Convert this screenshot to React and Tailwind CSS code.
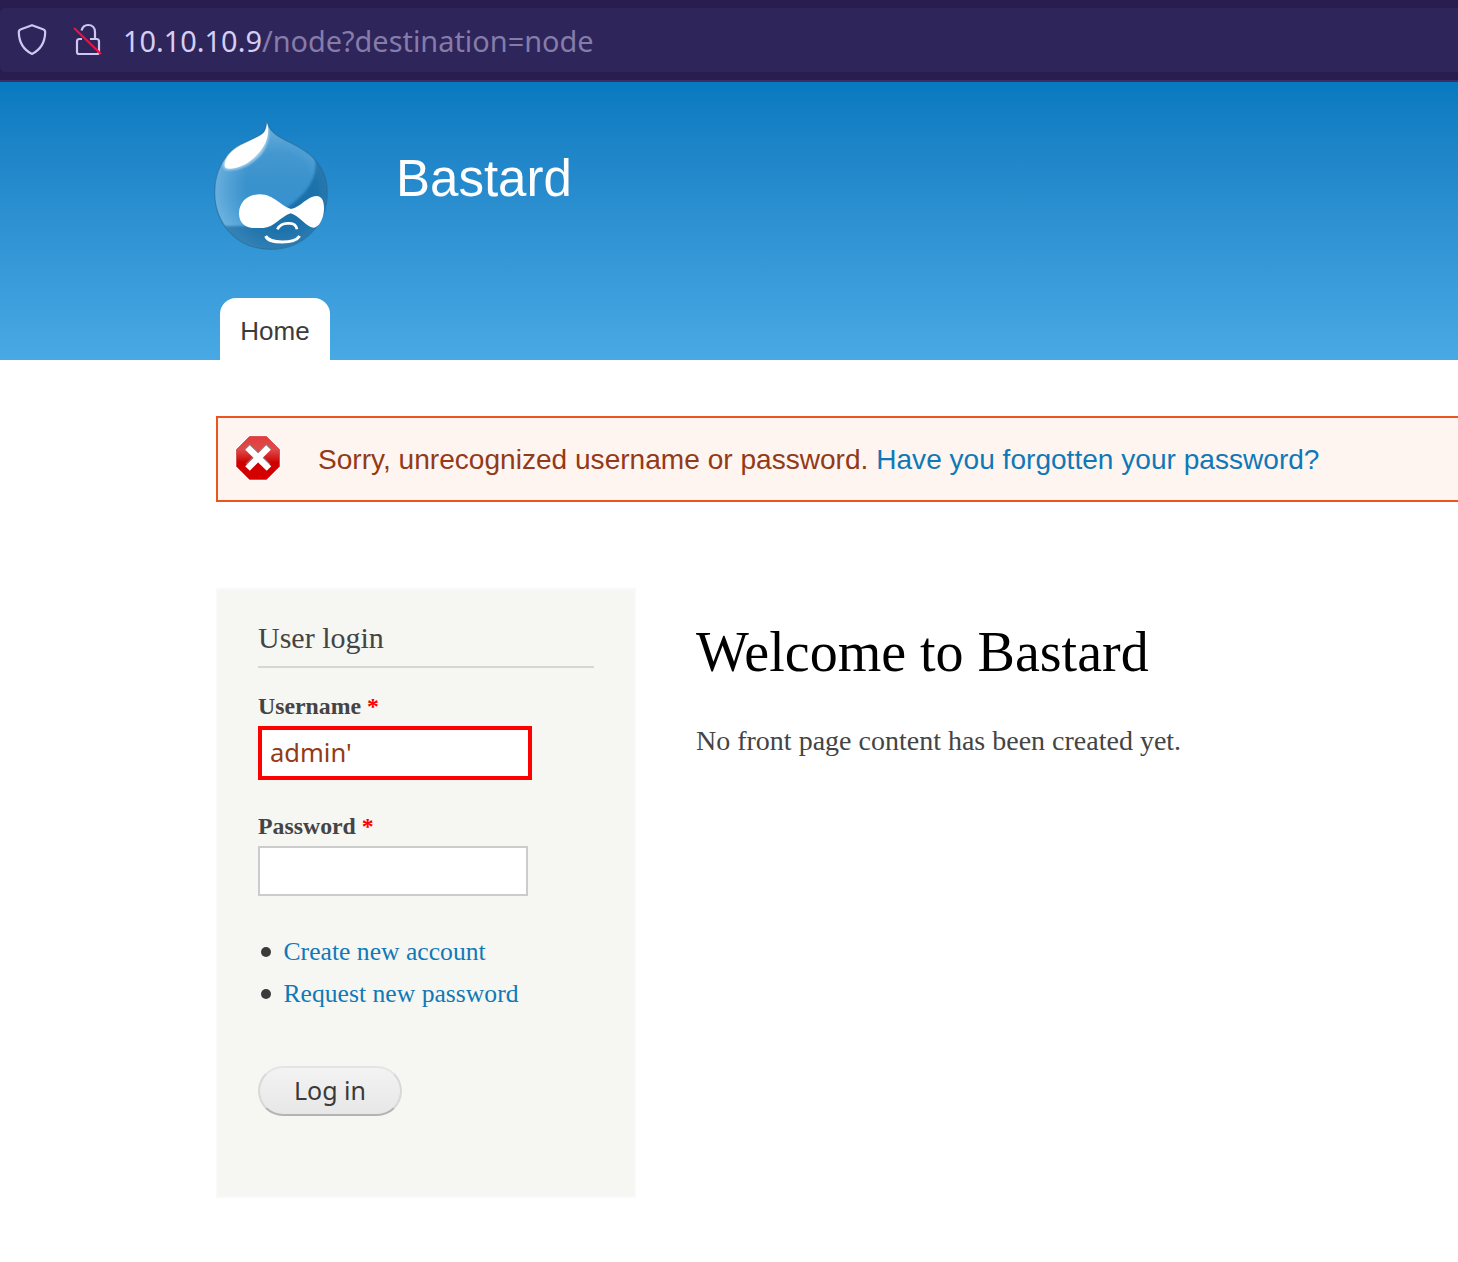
import React from "react";

const SANS = "font-['Liberation_Sans',Arial,sans-serif]";
const SERIF = "font-['Liberation_Serif',Georgia,serif]";

function AddressBar() {
  return (
    <div className="h-[82px] border-b-2 border-[#3b2d68] bg-[#291d4f] pt-2">
      <div className="flex h-16 items-center rounded-l-md bg-[#2e255b] pl-4 font-['Noto_Sans',sans-serif]">
        <svg width="32" height="34" viewBox="0 0 32 34" fill="none" stroke="#cfc7f0" strokeWidth="2.2" strokeLinejoin="round">
          <path d="M16 2.200 L27 6.200 Q29.300 7 29.200 9.400 Q28.800 24.500 16 31 Q3.200 24.500 2.800 9.400 Q2.700 7 5 6.200 Z" />
        </svg>
        <svg className="ml-6" width="32" height="34" viewBox="0 0 32 34" fill="none" strokeWidth="2.2">
          <path d="M9.500 7.500 C10.500 4 12.500 2 16 2 C20.500 2 23 5 23 9 V16" stroke="#cfc7f0" />
          <path d="M10 16 H7.500 Q5 16 5 18.500 V29 Q5 31 7 31 H25 Q27 31 27 29 V18.500 Q27 16 24.500 16 H18" stroke="#cfc7f0" />
          <path d="M2 5 L29 31" stroke="#f0103f" />
        </svg>
        <div className="mt-0.5 ml-[19px] whitespace-nowrap text-[28.9px] leading-none text-[#857ca8]">
          <span className="text-[#d5cef2]">10.10.10.9</span>/node?destination=node
        </div>
      </div>
    </div>
  );
}

const DROP =
  "M201 34 C205 52 215 68 240 82 C275 102 316 116 342 146 C370 176 382 208 382 246 C382 345 310 418 210 418 C115 418 44 345 44 246 C44 195 60 162 84 132 C112 100 153 94 184 72 C199 62 197 49 201 34 Z";

function Logo() {
  return (
    <svg width="114" height="130" viewBox="42 36 342 390" fill="none">
      <defs>
        <linearGradient id="drop" x1="0" y1="0" x2="0" y2="1">
          <stop offset="0" stopColor="#4f9ed3" />
          <stop offset=".45" stopColor="#3b93cd" />
          <stop offset="1" stopColor="#328fce" />
        </linearGradient>
        <radialGradient id="glow" gradientUnits="userSpaceOnUse" cx="235" cy="225" r="195">
          <stop offset=".5" stopColor="#7fbce5" stopOpacity="0" />
          <stop offset="1" stopColor="#8cc5ea" stopOpacity=".6" />
        </radialGradient>
        <radialGradient id="shade" gradientUnits="userSpaceOnUse" cx="240" cy="250" r="190">
          <stop offset="0" stopColor="#1c6fa8" />
          <stop offset=".6" stopColor="#1f72ab" />
          <stop offset="1" stopColor="#3583b6" />
        </radialGradient>
        <filter id="soft" x="-10%" y="-10%" width="120%" height="120%">
          <feGaussianBlur stdDeviation="2.500" />
        </filter>
        <clipPath id="shape">
          <path d={DROP} />
        </clipPath>
      </defs>
      <g clipPath="url(#shape)">
        <rect x="40" y="30" width="346" height="392" fill="url(#drop)" />
        <rect x="40" y="30" width="346" height="392" fill="url(#glow)" />
        <path d="M345 142 C353 200 330 240 270 286 L240 310 L190 348 H74 C44 345 50 390 110 425 H390 V190 C378 168 365 155 345 142 Z" fill="url(#shade)" filter="url(#soft)" />
        <path d="M200 36 C196 58 200 68 184 76 C145 96 105 96 78 138 C70 152 64 164 75 179 C106 187 152 168 181 136 C199 115 211 84 205 56 Z" fill="#b5d9f1" opacity=".8" filter="url(#soft)" />
        <path d="M200 36 C198 58 196 66 182 75 C146 96 108 99 82 140 C75 152 72 162 75 172 C84 178 93 177 103 175 C132 169 158 151 179 126 C198 102 209 76 203 42 Z" fill="#fff" />
      </g>
      <path d={DROP} stroke="#20658f" strokeOpacity=".55" strokeWidth="3.500" />
      <path d="M180 253 C220 253 243 289 273 297 C302 292 322 258 350 258 C366 258 373 275 372 298 C371 328 356 354 340 353 C320 352 296 316 272 310 C241 320 222 353 190 354 H158 C132 352 117 335 117 310 C118 273 145 253 180 253 Z" fill="#fff" />
      <path d="M232 358 C238 346 248 339 266 340 C281 339 289 347 291 358" stroke="#fff" strokeWidth="8" />
      <path d="M197 378 C204 393 220 396 247 396 C272 396 290 392 299 378" stroke="#fff" strokeWidth="9" />
    </svg>
  );
}

function SiteHeader() {
  return (
    <header className={`${SANS} flex h-[278px] flex-col justify-between bg-linear-to-b from-[#0779bf] to-[#48a9e4] pl-[214px]`}>
      <div className="flex pt-10">
        <Logo />
        <h1 className="mt-7 ml-[68px] text-[51px] leading-[58px] text-[#fffeff]">Bastard</h1>
      </div>
      <nav className="pl-1.5">
        <a className="block h-[62px] w-[110px] rounded-t-2xl bg-white text-center text-[26px] leading-[66px] text-[#3b3b3b]">Home</a>
      </nav>
    </header>
  );
}

function ErrorMessage() {
  return (
    <div className={`${SANS} mt-14 ml-[216px] flex h-[86px] border-2 border-r-0 border-[#ed541d] bg-[#fef5f1] pl-[17px] text-[28.08px] leading-[84px] whitespace-nowrap text-[#933a18]`}>
      <svg className="mt-[17px] shrink-0" width="46" height="46" viewBox="0 0 46 46">
        <defs>
          <linearGradient id="stop" x1="0" y1="0" x2="0" y2="1">
            <stop offset="0" stopColor="#e23c3c" />
            <stop offset=".3" stopColor="#df4a4a" />
            <stop offset=".52" stopColor="#d41717" />
            <stop offset=".6" stopColor="#cf0000" />
            <stop offset="1" stopColor="#d80000" />
          </linearGradient>
        </defs>
        <path d="M14 0 H32 L46 14 V32 L32 46 H14 L0 32 V14 Z" fill="#fff" opacity=".7" />
        <path d="M14.500 1.500 H31.500 L44.500 14.500 V31.500 L31.500 44.500 H14.500 L1.500 31.500 V14.500 Z" fill="url(#stop)" stroke="#d93434" strokeOpacity=".7" />
        <path d="M12 11 L33 31 M34 11 L13 31" stroke="#8a7777" strokeWidth="7" opacity=".8" />
        <path d="M12.500 12.500 L34 33.500 M33.500 12.500 L12.500 33.500" stroke="#fff" strokeWidth="6.500" />
      </svg>
      <p className="ml-[37px]">
        Sorry, unrecognized username or password. <a className="text-[#0f79b8]">Have you forgotten your password?</a>
      </p>
    </div>
  );
}

function FieldLabel({ children }) {
  return (
    <label className="block text-[23.8px] leading-7 font-bold">
      {children} <span className="text-[#f00]">*</span>
    </label>
  );
}

function LoginBlock() {
  return (
    <aside className="h-[610px] w-[420px] shrink-0 border-2 border-[#f9f9f9] bg-[#f6f6f2] px-10 pt-8">
      <h2 className="h-[46px] border-b-2 border-[#d6d6d6] text-[30px] leading-8">User login</h2>
      <div className="pt-6">
        <FieldLabel>Username</FieldLabel>
        <div className="mt-1.5 h-[54px] w-[274px] border-4 border-[#f00] bg-white pl-2 font-['Noto_Sans',sans-serif] text-[25.5px] leading-[44px] text-[#933a18]">admin'</div>
      </div>
      <div className="pt-8">
        <FieldLabel>Password</FieldLabel>
        <div className="mt-1.5 h-[50px] w-[270px] border-2 border-[#ccc] bg-white" />
      </div>
      <ul className="mt-[35px] text-[25.65px] leading-[42px] text-[#0f79b8]">
        {["Create new account", "Request new password"].map((item) => (
          <li key={item} className="flex items-center">
            <span className="mr-[13px] ml-[3px] size-[9.5px] rounded-full bg-[#3b3b3b]" />
            {item}
          </li>
        ))}
      </ul>
      <button className="mt-[51px] block h-[50px] w-[144px] rounded-full border-2 border-[#d8d8d8] border-t-[#e4e4e4] border-b-[#b4b4b4] bg-linear-to-b from-[#f3f3f3] to-[#e7e7e7] pb-0.5 font-['Noto_Sans',sans-serif] text-[25px] leading-[44px] text-[#3a3a3a]">Log in</button>
    </aside>
  );
}

export default function App() {
  return (
    <div className="h-[1262px] w-[1458px] overflow-hidden bg-white">
      <AddressBar />
      <SiteHeader />
      <ErrorMessage />
      <div className={`${SERIF} mt-[86px] flex pl-[216px] text-[#444]`}>
        <LoginBlock />
        <main className="ml-[60px] pt-[32px]">
          <h1 className="text-[56px] leading-[64px] text-black">Welcome to Bastard</h1>
          <p className="mt-10 text-[28px] leading-[34px]">No front page content has been created yet.</p>
        </main>
      </div>
    </div>
  );
}
